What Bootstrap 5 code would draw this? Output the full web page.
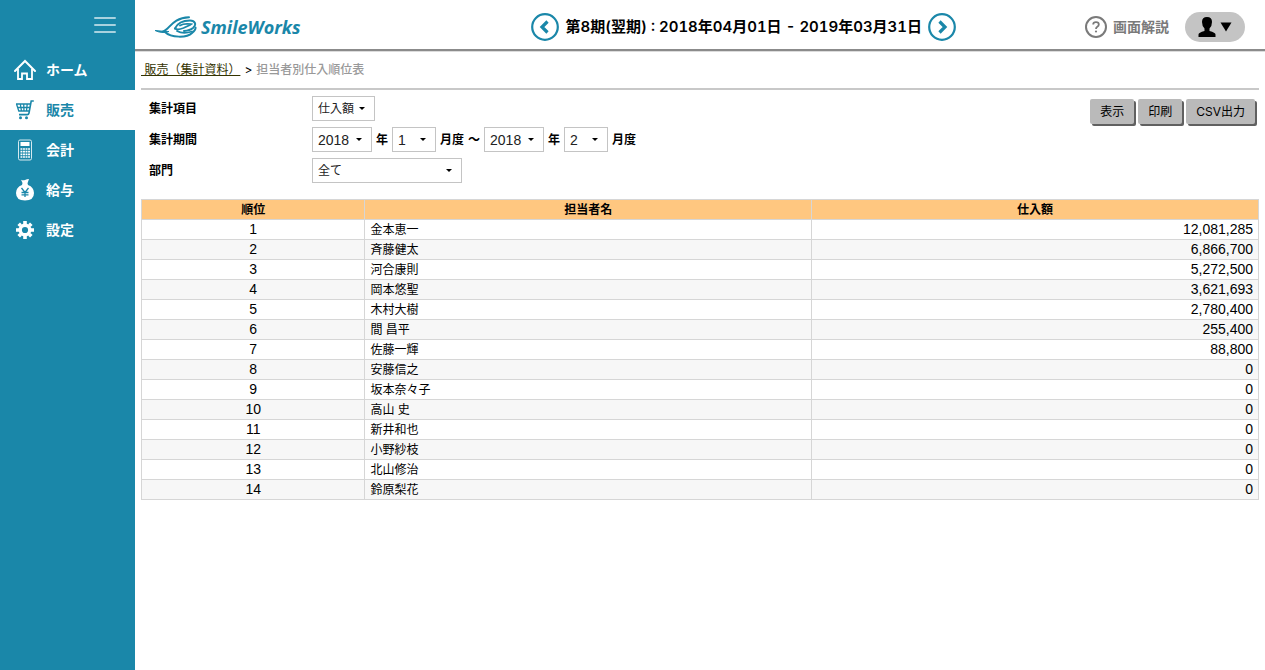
<!DOCTYPE html>
<html lang="ja">
<head>
<meta charset="utf-8">
<meta name="viewport" content="width=device-width, initial-scale=1">
<title>担当者別仕入順位表 - SmileWorks</title>
<link href="https://cdn.jsdelivr.net/npm/bootstrap@5.3.0/dist/css/bootstrap.min.css" rel="stylesheet">
<style>
  :root { --sw-blue: #1a87a9; }
  body { font-family: Inter, "Noto Sans CJK JP", sans-serif; font-size: 12px; line-height: 18px; color: #000; }
  .side-menu { width: 135px; background: var(--sw-blue); }
  .side-top { height: 50px; padding-right: 19px; }
  .side-menu .nav-link { height: 40px; padding: 0 0 0 14px; gap: 10px; color: #fff; font-size: 14px; font-weight: 600; border-radius: 0; }
  .side-menu .nav-link.active { background: #fff; color: var(--sw-blue); }
  .top-bar { height: 51px; padding: 4px 20px 0; border-bottom: 2px solid #8b8b8b; box-shadow: 0 1px 0 #dcdcdc; }
  .brand-name { font-family: "Open Sans", sans-serif; font-style: italic; font-weight: 700; font-size: 18px; color: var(--sw-blue); }
  .period { padding-left: 102px; gap: 6px; font-size: 15px; font-weight: 600; font-variant-numeric: tabular-nums; }
  .help-link { color: #7a7a7a; font-size: 14px; font-weight: 700; gap: 6px; }
  .user-btn { width: 60px; height: 30px; background: #c4c4c4; gap: 4px; }
  .content-area { padding: 0 6px; }
  .crumbs { height: 39px; border-bottom: 2px solid #c8c8c8; margin-bottom: 6px; gap: 4px; }
  .crumbs a { color: #330; }
  .crumbs .current-page { color: #999; font-weight: 500; }
  .filter-row { margin-bottom: 6px; min-height: 25px; }
  .filter-row > .caption { width: 171px; padding-left: 8px; font-weight: 600; }
  .filter-row .unit { font-weight: 600; }
  .pick { appearance: none; height: 25px; padding: 0 0 0 5px; border: 1px solid #c4c4c4; border-radius: 0; color: #222; font-size: 12px;
    background: #fff url("data:image/svg+xml,%3Csvg xmlns='http://www.w3.org/2000/svg' width='6' height='3'%3E%3Cpath d='M0 0h6L3 3z'/%3E%3C/svg%3E") no-repeat right 9px center; }
  .pick-year, .pick-month { font-family: "Liberation Sans", sans-serif; font-size: 14px; }
  .pick-year { width: 60px; }
  .pick-month { width: 44px; }
  .pick-item { width: 63px; }
  .pick-dept { width: 150px; }
  .tool-btn { height: 25px; padding: 0 10px; border: 0; border-radius: 2px; background: #bababa; box-shadow: 2px 2px 0 #606060; font-size: 12px; color: #000; }
  .tool-set { padding: 3px 4px 0 0; }
  .rank-table { table-layout: fixed; margin-top: 16px; border-color: #d6d6d6; }
  .rank-table > :not(caption) > * > * { padding: 0 5px; height: 20px; line-height: 19px; color: #000; }
  .rank-table > thead > tr > th { background: #ffc780; font-weight: 600; text-align: center; }
  .rank-table > tbody > tr:nth-child(even) > td { background: #f7f7f7; }
  .rank-table .figure-cell { font-family: "Liberation Sans", sans-serif; font-size: 14px; }
</style>
</head>
<body>
<div class="d-flex min-vh-100">
  <aside class="side-menu flex-shrink-0">
    <div class="side-top d-flex align-items-center justify-content-end">
      <button type="button" class="btn p-0 border-0 d-flex" aria-label="メニュー">
        <svg width="22" height="18" viewBox="0 0 22 18" stroke="#a9d2df" stroke-width="2" stroke-linecap="round"><path d="M1 2h20M1 9h20M1 16h20"/></svg>
      </button>
    </div>
    <nav class="nav flex-column">
      <a class="nav-link d-flex align-items-center" href="#">
        <svg width="22" height="22" viewBox="0 0 22 22" fill="none" stroke="#fff" stroke-width="2"><path d="M1 12 11 2l10 10" stroke-linecap="round"/><path d="M4 10v10h4v-5.500h5V20h5V10" stroke-width="1.800"/></svg>ホーム</a>
      <a class="nav-link active d-flex align-items-center" href="#" aria-current="page">
        <svg width="22" height="22" viewBox="0 0 22 22" fill="none" stroke="currentColor"><path d="M19.800 2h-2.600L15 14q-.3 1.600-1.800 1.600H5" stroke-width="1.600"/><path d="M2 5h14.500M2.500 5 4.800 12h10.400M3.500 8.500h12.500M6.300 5l1.200 7M9.700 5l.3 7M13.200 5l-.7 7" stroke-width="1.300"/><g fill="currentColor" stroke="none"><circle cx="6.500" cy="18.700" r="1.500"/><circle cx="12.500" cy="18.700" r="1.500"/></g></svg>販売</a>
      <a class="nav-link d-flex align-items-center" href="#">
        <svg width="22" height="22" viewBox="0 0 22 22" fill="none" stroke="#d5e9ef"><rect x="4.500" y="1" width="13" height="20" rx="1.500"/><rect x="6.500" y="3" width="9" height="4" fill="#fff" stroke="none"/><path d="M6.500 10h9.500M6.500 12.700h9.500M6.500 15.400h9.500M6.500 18h9.500" stroke="#fff" stroke-width="1.700" stroke-dasharray="1.900 .63"/></svg>会計</a>
      <a class="nav-link d-flex align-items-center" href="#">
        <svg width="22" height="22" viewBox="0 0 22 22" fill="#fff"><path d="M7 .800q2 1 4 .2t4-1L13.500 4.200 14 6q6 2.300 6 8 0 7.500-9 7.500T2 14q0-5.700 6-8L8.500 4z"/><path d="m7.500 9 3.500 4.500L14.500 9M11 13.500V18M7.500 13.500h7M7.500 15.800h7" fill="none" stroke="#1a87a9" stroke-width="1.300"/></svg>給与</a>
      <a class="nav-link d-flex align-items-center" href="#">
        <svg width="22" height="22" viewBox="0 0 22 22"><circle cx="11" cy="11" r="4.800" fill="none" stroke="#fff" stroke-width="3.400"/><g stroke="#fff" stroke-width="3.600"><path d="M11 2v3M11 17v3M2 11h3M17 11h3M4.700 4.700l2 2M15.300 15.300l2 2M4.700 17.300l2-2M15.300 6.700l2-2"/></g></svg>設定</a>
    </nav>
  </aside>

  <div class="flex-grow-1 d-flex flex-column">
    <header class="top-bar d-flex align-items-center">
      <a href="#" class="d-flex align-items-center text-decoration-none gap-1">
        <svg width="42" height="22" viewBox="0 0 42 22" fill="none" stroke="#1a87a9" stroke-linecap="round"><path d="M0 14.500Q7 18 14 15.500 9.500 15.500 0 14.500" fill="#1a87a9" stroke-width="1"/><path d="M8 15.500C15 13 17 2 34 1.200" stroke-width="2"/><path d="M10 16c6 6 22 6 27 1q4-3.500 3.500-5.500" stroke-width="2"/><path d="M20 12.500C23 6 30 4.500 35 4.500s7 4 3 7.500q-3 2.500-9 3" stroke-width="2"/><path d="M20 12.500q2.500 2 8.500-.5 6-2.800 7.500-3.800-7-1-11 1.300M22 15q6 3.500 15 .5" stroke-width="1.800"/></svg>
        <span class="brand-name">SmileWorks</span>
      </a>
      <div class="period flex-grow-1 d-flex align-items-center justify-content-center">
        <button type="button" class="btn p-0 border-0 d-flex" aria-label="前の期"><svg width="28" height="28" viewBox="0 0 28 28" fill="none" stroke="#1a87a9"><circle cx="14" cy="14" r="12.800" stroke-width="2.200"/><path d="m16.500 8.500-5.500 5.500 5.500 5.500" stroke-width="3.200"/></svg></button>
        <span class="text-nowrap">第8期(翌期) : 2018年04月01日 - 2019年03月31日</span>
        <button type="button" class="btn p-0 border-0 d-flex" aria-label="次の期"><svg width="28" height="28" viewBox="0 0 28 28" fill="none" stroke="#1a87a9"><circle cx="14" cy="14" r="12.800" stroke-width="2.200"/><path d="m11.500 8.500 5.500 5.500-5.500 5.500" stroke-width="3.200"/></svg></button>
      </div>
      <a href="#" class="help-link d-flex align-items-center text-decoration-none text-nowrap">
        <svg width="22" height="22" viewBox="0 0 22 22" fill="none" stroke="#7a7a7a"><circle cx="11" cy="11" r="10" stroke-width="2"/><path d="M8.200 8.500q0-2.300 2.800-2.300t2.800 2.300q0 1.300-1.500 2.200Q11 11.500 11 13" stroke-width="1.800"/><circle cx="11" cy="15.500" r="1.100" fill="#7a7a7a" stroke="none"/></svg>画面解説</a>
      <button type="button" class="user-btn btn p-0 border-0 rounded-pill d-flex align-items-center justify-content-center ms-3" aria-label="ユーザー">
        <svg width="18" height="20" viewBox="0 0 18 20"><path d="M9 0q5 0 5 5 0 4-2.500 6.500V14q6 1.500 6 3.500V20H.5v-2.500Q.5 15.500 6.500 14v-2.500Q4 9 4 5q0-5 5-5"/></svg>
        <svg width="12" height="10" viewBox="0 0 12 10"><path d="M.5.500h11L6 9.500z"/></svg>
      </button>
    </header>

    <main class="content-area">
      <nav class="crumbs d-flex align-items-center" aria-label="パンくず"><a href="#">&nbsp;販売（集計資料）</a><span>&gt;</span><span class="current-page">担当者別仕入順位表</span></nav>

      <form class="d-flex justify-content-between align-items-start">
        <div>
          <div class="filter-row d-flex align-items-center">
            <label class="caption" for="item">集計項目</label>
            <select id="item" class="pick pick-item"><option>仕入額</option></select>
          </div>
          <div class="filter-row d-flex align-items-center">
            <label class="caption" for="fromYear">集計期間</label>
            <div class="d-flex align-items-center gap-1">
              <select id="fromYear" class="pick pick-year"><option>2018</option></select>
              <label class="unit" for="fromYear">年</label>
              <select id="fromMonth" class="pick pick-month"><option>1</option></select>
              <label class="unit" for="fromMonth">月度</label>
              <span class="unit">～</span>
              <select id="toYear" class="pick pick-year"><option>2018</option></select>
              <label class="unit" for="toYear">年</label>
              <select id="toMonth" class="pick pick-month"><option>2</option></select>
              <label class="unit" for="toMonth">月度</label>
            </div>
          </div>
          <div class="filter-row d-flex align-items-center mb-0">
            <label class="caption" for="dept">部門</label>
            <select id="dept" class="pick pick-dept"><option>全て</option></select>
          </div>
        </div>
        <div class="tool-set d-flex gap-1">
          <button type="button" class="btn tool-btn">表示</button>
          <button type="button" class="btn tool-btn">印刷</button>
          <button type="button" class="btn tool-btn">CSV出力</button>
        </div>
      </form>

      <table class="rank-table table table-bordered mb-0">
        <colgroup><col style="width:20%"><col style="width:40%"><col style="width:40%"></colgroup>
        <thead><tr><th scope="col">順位</th><th scope="col">担当者名</th><th scope="col">仕入額</th></tr></thead>
        <tbody>
          <tr><td class="figure-cell text-center">1</td><td>金本恵一</td><td class="figure-cell text-end">12,081,285</td></tr>
          <tr><td class="figure-cell text-center">2</td><td>斉藤健太</td><td class="figure-cell text-end">6,866,700</td></tr>
          <tr><td class="figure-cell text-center">3</td><td>河合康則</td><td class="figure-cell text-end">5,272,500</td></tr>
          <tr><td class="figure-cell text-center">4</td><td>岡本悠聖</td><td class="figure-cell text-end">3,621,693</td></tr>
          <tr><td class="figure-cell text-center">5</td><td>木村大樹</td><td class="figure-cell text-end">2,780,400</td></tr>
          <tr><td class="figure-cell text-center">6</td><td>間 昌平</td><td class="figure-cell text-end">255,400</td></tr>
          <tr><td class="figure-cell text-center">7</td><td>佐藤一輝</td><td class="figure-cell text-end">88,800</td></tr>
          <tr><td class="figure-cell text-center">8</td><td>安藤信之</td><td class="figure-cell text-end">0</td></tr>
          <tr><td class="figure-cell text-center">9</td><td>坂本奈々子</td><td class="figure-cell text-end">0</td></tr>
          <tr><td class="figure-cell text-center">10</td><td>高山 史</td><td class="figure-cell text-end">0</td></tr>
          <tr><td class="figure-cell text-center">11</td><td>新井和也</td><td class="figure-cell text-end">0</td></tr>
          <tr><td class="figure-cell text-center">12</td><td>小野紗枝</td><td class="figure-cell text-end">0</td></tr>
          <tr><td class="figure-cell text-center">13</td><td>北山修治</td><td class="figure-cell text-end">0</td></tr>
          <tr><td class="figure-cell text-center">14</td><td>鈴原梨花</td><td class="figure-cell text-end">0</td></tr>
        </tbody>
      </table>
    </main>
  </div>
</div>
<script src="https://cdn.jsdelivr.net/npm/bootstrap@5.3.0/dist/js/bootstrap.bundle.min.js"></script>
</body>
</html>
